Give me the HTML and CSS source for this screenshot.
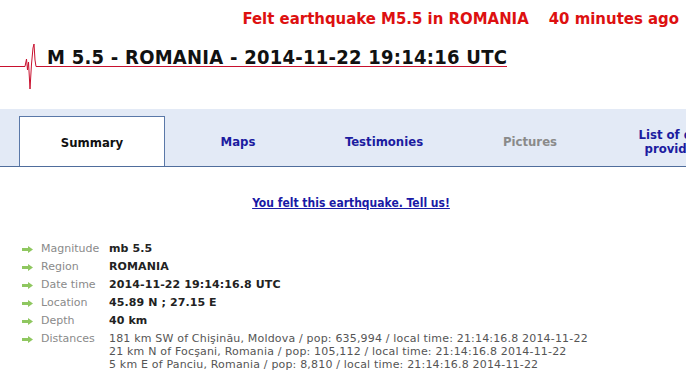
FILE: index.html
```html
<!DOCTYPE html>
<html lang="en">
<head>
    <meta charset="UTF-8">
    <title>M 5.5 - ROMANIA - 2014-11-22 19:14:16 UTC</title>
    <link rel="stylesheet" href="styles.css">
</head>
<body>
    <div class="felt-bar">
        <span>Felt earthquake M5.5 in ROMANIA</span>
        <span>40 minutes ago</span>
    </div>

    <div class="event-header">
        <svg class="seismo" width="47" height="52" viewBox="0 40 47 52">
            <polyline points="0,66.5 25,66.5 26.5,59 27.5,70 28.5,62 30,89 31.5,64 33,48 34,44 35,60 36,66.5 47,66.5"
                      fill="none" stroke="#c8102e" stroke-width="1"/>
        </svg>
        <h1>M 5.5 - ROMANIA - 2014-11-22 19:14:16 UTC</h1>
    </div>

    <div class="tabs">
        <div class="tab active">Summary</div>
        <div class="tab">Maps</div>
        <div class="tab">Testimonies</div>
        <div class="tab disabled">Pictures</div>
        <div class="tab">List of data<br>providers</div>
    </div>

    <div class="tell-us">
        <a href="#">You felt this earthquake. Tell us!</a>
    </div>

    <div class="details">
        <div class="row">
            <svg class="arrow" width="11" height="7" viewBox="0 0 11 7"><path d="M0 2h6V0l5 3.5L6 7V5H0z" fill="#8fc760"/></svg>
            <span class="label">Magnitude</span>
            <span class="value">mb 5.5</span>
        </div>
        <div class="row">
            <svg class="arrow" width="11" height="7" viewBox="0 0 11 7"><path d="M0 2h6V0l5 3.5L6 7V5H0z" fill="#8fc760"/></svg>
            <span class="label">Region</span>
            <span class="value">ROMANIA</span>
        </div>
        <div class="row">
            <svg class="arrow" width="11" height="7" viewBox="0 0 11 7"><path d="M0 2h6V0l5 3.5L6 7V5H0z" fill="#8fc760"/></svg>
            <span class="label">Date time</span>
            <span class="value">2014-11-22 19:14:16.8 UTC</span>
        </div>
        <div class="row">
            <svg class="arrow" width="11" height="7" viewBox="0 0 11 7"><path d="M0 2h6V0l5 3.5L6 7V5H0z" fill="#8fc760"/></svg>
            <span class="label">Location</span>
            <span class="value">45.89 N ; 27.15 E</span>
        </div>
        <div class="row">
            <svg class="arrow" width="11" height="7" viewBox="0 0 11 7"><path d="M0 2h6V0l5 3.5L6 7V5H0z" fill="#8fc760"/></svg>
            <span class="label">Depth</span>
            <span class="value">40 km</span>
        </div>
        <div class="row">
            <svg class="arrow" width="11" height="7" viewBox="0 0 11 7"><path d="M0 2h6V0l5 3.5L6 7V5H0z" fill="#8fc760"/></svg>
            <span class="label">Distances</span>
            <span class="distances">
                181 km SW of Chişinău, Moldova / pop: 635,994 / local time: 21:14:16.8 2014-11-22<br>
                21 km N of Focşani, Romania / pop: 105,112 / local time: 21:14:16.8 2014-11-22<br>
                5 km E of Panciu, Romania / pop: 8,810 / local time: 21:14:16.8 2014-11-22
            </span>
        </div>
    </div>
</body>
</html>
```

FILE: styles.css
```css
* {
    margin: 0;
    padding: 0;
    box-sizing: border-box;
}

body {
    background: white;
    font-family: 'DejaVu Sans', Verdana, sans-serif;
    font-size: 11px;
    width: 686px;
    overflow: hidden;
}

.felt-bar {
    display: flex;
    justify-content: flex-end;
    gap: 20px;
    padding: 9px 7px 0 0;
    height: 38px;
    line-height: 20px;
    color: #dd1010;
    font-family: 'DejaVu Sans Condensed', 'DejaVu Sans', sans-serif;
    font-weight: bold;
    font-size: 16.6px;
}

.event-header {
    display: flex;
    align-items: flex-start;
    height: 71px;
    padding-top: 2px;
}

.seismo {
    display: block;
    flex: none;
}

h1 {
    margin-top: 8px;
    font-family: 'DejaVu Sans Condensed', 'DejaVu Sans', sans-serif;
    font-size: 20px;
    letter-spacing: 0.25px;
    line-height: 18px;
    color: #111;
    border-bottom: 1px solid #c8102e;
    white-space: nowrap;
}

.tabs {
    display: flex;
    background: #e3eaf6;
    border-bottom: 1px solid #4f6d9c;
    padding: 7px 0 0 19px;
    height: 58px;
    overflow: hidden;
}

.tab {
    flex: none;
    width: 146px;
    display: flex;
    align-items: center;
    justify-content: center;
    text-align: center;
    font-family: 'DejaVu Sans Condensed', 'DejaVu Sans', sans-serif;
    font-weight: bold;
    font-size: 13px;
    line-height: 14px;
    color: #1c1ca0;
    padding-top: 1px;
}

.tab.active {
    background: white;
    color: #111;
    border: 1px solid #5a78a8;
    border-bottom: none;
    margin-bottom: -1px;
}

.tab.disabled {
    color: #8a8a8a;
}

.tell-us {
    text-align: center;
    padding: 28px 0 0 16px;
    line-height: 16px;
}

.tell-us a {
    color: #1a1aa6;
    font-family: 'DejaVu Sans Condensed', 'DejaVu Sans', sans-serif;
    font-weight: bold;
    font-size: 12px;
}

.details {
    padding: 28px 0 0 22px;
}

.row {
    display: flex;
    align-items: flex-start;
    line-height: 18px;
}

.arrow {
    flex: none;
    margin: 6px 8px 0 0;
}

.label {
    flex: none;
    width: 68px;
    color: #8a8a8a;
}

.value {
    font-weight: bold;
    color: #222;
    letter-spacing: 0.1px;
}

.distances {
    color: #555;
    line-height: 13px;
    padding-top: 2px;
    white-space: nowrap;
    letter-spacing: 0.18px;
}
```
